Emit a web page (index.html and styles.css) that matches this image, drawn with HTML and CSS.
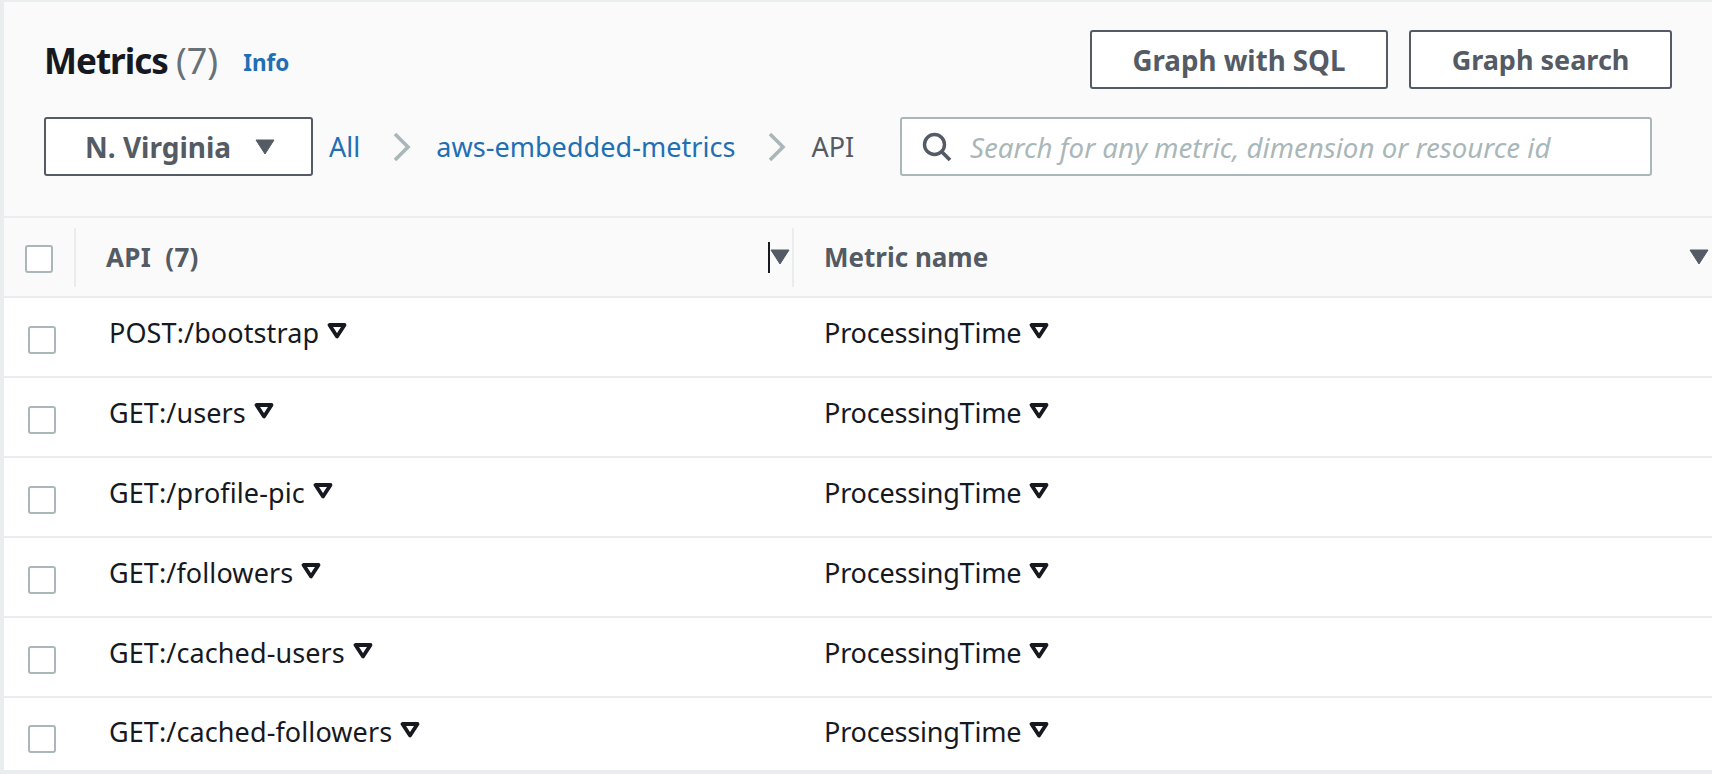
FILE: index.html
```html
<!DOCTYPE html>
<html lang="en">
<head>
  <meta charset="UTF-8">
  <meta name="viewport" content="width=device-width, initial-scale=1.0">
  <title>Metrics</title>
  <link rel="stylesheet" href="styles.css">
</head>
<body>
  <div class="panel">
    <div class="header">
      <div class="title-row">
        <h1>Metrics <span class="count">(7)</span></h1>
        <a class="info" href="#">Info</a>
        <div class="actions">
          <button class="btn btn-sql">Graph with SQL</button>
          <button class="btn btn-search">Graph search</button>
        </div>
      </div>
      <div class="filter-row">
        <button class="region">N. Virginia
          <svg class="region-caret" viewBox="0 0 20 16"><path d="M1 1h18l-9 14z" fill="#545b64" stroke="#545b64" stroke-linejoin="round"/></svg>
        </button>
        <nav class="crumbs">
          <a href="#">All</a>
          <svg class="chevron" viewBox="0 0 18 30"><path d="M2 2l13 13L2 28" fill="none" stroke="#aab7b8" stroke-width="3.6"/></svg>
          <a href="#">aws-embedded-metrics</a>
          <svg class="chevron" viewBox="0 0 18 30"><path d="M2 2l13 13L2 28" fill="none" stroke="#aab7b8" stroke-width="3.6"/></svg>
          <span class="current">API</span>
        </nav>
        <div class="search">
          <svg class="search-icon" viewBox="0 0 30 30"><circle cx="12.5" cy="12.5" r="10" fill="none" stroke="#545b64" stroke-width="3.4"/><path d="M20 20l8 8" stroke="#545b64" stroke-width="3.8"/></svg>
          <span class="placeholder">Search for any metric, dimension or resource id</span>
        </div>
      </div>
    </div>

    <div class="thead">
      <div class="cell-check"><span class="check head-check"></span></div>
      <div class="th th-api">API&nbsp; (7)
        <span class="resizer"></span>
        <svg class="sort" viewBox="0 0 20 16"><path d="M1 1h18l-9 14z" fill="#545b64" stroke="#545b64" stroke-linejoin="round"/></svg>
      </div>
      <div class="th th-metric">Metric name
        <svg class="sort" viewBox="0 0 20 16"><path d="M1 1h18l-9 14z" fill="#545b64" stroke="#545b64" stroke-linejoin="round"/></svg>
      </div>
    </div>

    <div class="row">
      <div class="cell-check"><span class="check"></span></div>
      <div class="td td-api">POST:/bootstrap <svg class="caret" viewBox="0 0 20 16"><path d="M2.5 2h15L10 13.5z" fill="none" stroke="#16191f" stroke-width="3.8" stroke-linejoin="round"/></svg></div>
      <div class="td td-metric">ProcessingTime <svg class="caret" viewBox="0 0 20 16"><path d="M2.5 2h15L10 13.5z" fill="none" stroke="#16191f" stroke-width="3.8" stroke-linejoin="round"/></svg></div>
    </div>
    <div class="row">
      <div class="cell-check"><span class="check"></span></div>
      <div class="td td-api">GET:/users <svg class="caret" viewBox="0 0 20 16"><path d="M2.5 2h15L10 13.5z" fill="none" stroke="#16191f" stroke-width="3.8" stroke-linejoin="round"/></svg></div>
      <div class="td td-metric">ProcessingTime <svg class="caret" viewBox="0 0 20 16"><path d="M2.5 2h15L10 13.5z" fill="none" stroke="#16191f" stroke-width="3.8" stroke-linejoin="round"/></svg></div>
    </div>
    <div class="row">
      <div class="cell-check"><span class="check"></span></div>
      <div class="td td-api">GET:/profile-pic <svg class="caret" viewBox="0 0 20 16"><path d="M2.5 2h15L10 13.5z" fill="none" stroke="#16191f" stroke-width="3.8" stroke-linejoin="round"/></svg></div>
      <div class="td td-metric">ProcessingTime <svg class="caret" viewBox="0 0 20 16"><path d="M2.5 2h15L10 13.5z" fill="none" stroke="#16191f" stroke-width="3.8" stroke-linejoin="round"/></svg></div>
    </div>
    <div class="row">
      <div class="cell-check"><span class="check"></span></div>
      <div class="td td-api">GET:/followers <svg class="caret" viewBox="0 0 20 16"><path d="M2.5 2h15L10 13.5z" fill="none" stroke="#16191f" stroke-width="3.8" stroke-linejoin="round"/></svg></div>
      <div class="td td-metric">ProcessingTime <svg class="caret" viewBox="0 0 20 16"><path d="M2.5 2h15L10 13.5z" fill="none" stroke="#16191f" stroke-width="3.8" stroke-linejoin="round"/></svg></div>
    </div>
    <div class="row">
      <div class="cell-check"><span class="check"></span></div>
      <div class="td td-api">GET:/cached-users <svg class="caret" viewBox="0 0 20 16"><path d="M2.5 2h15L10 13.5z" fill="none" stroke="#16191f" stroke-width="3.8" stroke-linejoin="round"/></svg></div>
      <div class="td td-metric">ProcessingTime <svg class="caret" viewBox="0 0 20 16"><path d="M2.5 2h15L10 13.5z" fill="none" stroke="#16191f" stroke-width="3.8" stroke-linejoin="round"/></svg></div>
    </div>
    <div class="row row-last">
      <div class="cell-check"><span class="check"></span></div>
      <div class="td td-api">GET:/cached-followers <svg class="caret" viewBox="0 0 20 16"><path d="M2.5 2h15L10 13.5z" fill="none" stroke="#16191f" stroke-width="3.8" stroke-linejoin="round"/></svg></div>
      <div class="td td-metric">ProcessingTime <svg class="caret" viewBox="0 0 20 16"><path d="M2.5 2h15L10 13.5z" fill="none" stroke="#16191f" stroke-width="3.8" stroke-linejoin="round"/></svg></div>
    </div>
  </div>
</body>
</html>
```

FILE: styles.css
```css
* { box-sizing: border-box; }
html, body { height: 100%; }
body { margin: 0; padding: 2px 0 4px 4px; background: #eaeded; font-family: "Noto Sans", sans-serif; font-size: 27px; color: #16191f; overflow: hidden; }
a { color: #1f6fb5; text-decoration: none; }

.panel { background: #fff; }
.header { height: 216px; background: #fafafa; border-bottom: 2px solid #eaeded; padding: 28px 40px 0 40px; }
.title-row { display: flex; align-items: center; height: 59px; }
h1 { margin: 2px 0 0; font-size: 35px; font-weight: 700; letter-spacing: -1px; }
.count { font-size: 36px; font-weight: 400; letter-spacing: 0; color: #687078; }
.info { margin-left: 25px; margin-top: 6px; font-size: 22.5px; font-weight: 700; }
.actions { margin-left: auto; display: flex; gap: 21px; }
.btn { height: 59px; background: #fff; border: 2px solid #545b64; border-radius: 3px; font: 700 28px "Noto Sans", sans-serif; color: #545b64; }
.btn-sql { width: 298px; font-size: 27.7px; }
.btn-search { width: 263px; font-size: 27px; }

.filter-row { display: flex; align-items: center; margin-top: 28px; height: 59px; }
.region { width: 269px; height: 59px; display: flex; align-items: center; padding: 0 0 0 39px; background: #fff; border: 2px solid #545b64; border-radius: 3px; font: 700 28px "Noto Sans", sans-serif; color: #545b64; }
.region-caret { width: 20px; height: 16px; margin-left: 24px; }
.crumbs { display: flex; align-items: center; margin-left: 16px; width: 571px; }
.chevron { width: 18px; height: 30px; margin: 0 25px 0 33px; }
.crumbs a + .chevron + a { letter-spacing: 0.05px; }
.current { color: #545b64; }
.search { flex: 1; height: 59px; display: flex; align-items: center; padding-left: 20px; background: #fff; border: 2px solid #aab7b8; border-radius: 3px; margin-right: 20px; }
.search-icon { width: 30px; height: 30px; flex: none; }
.placeholder { margin-left: 18px; font-size: 27.7px; font-style: italic; color: #aab7b8; }

.thead { display: flex; height: 80px; background: #fafafa; border-bottom: 2px solid #eaeded; align-items: center; }
.cell-check { width: 70px; flex: none; display: flex; padding-left: 21px; }
.check { width: 28px; height: 28px; background: #fff; border: 2px solid #aab7b8; border-radius: 3px; }
.head-check { margin-top: 4px; }
.th { display: flex; align-items: center; height: 59px; font-size: 26px; font-weight: 700; color: #545b64; border-left: 2px solid #eaeded; position: relative; }
.th-api { width: 718px; padding-left: 30px; letter-spacing: 0.3px; }
.th-metric { flex: 1; padding-left: 30px; }
.sort { position: absolute; top: 21px; right: 2px; width: 20px; height: 16px; }
.th-metric .sort { right: 3px; }
.resizer { position: absolute; top: 14px; right: 22px; width: 2px; height: 31px; background: #16191f; }

.row { display: flex; height: 80px; align-items: center; border-bottom: 2px solid #eaeded; }
.row-last { height: 72px; padding-top: 4px; border-bottom: 0; }
.row .cell-check { padding-left: 24px; padding-top: 6px; width: 105px; }
.td { display: flex; align-items: center; gap: 8px; margin-top: -9px; }
.td-api { width: 715px; letter-spacing: 0.1px; }
.td-metric { letter-spacing: -0.2px; }
.caret { width: 20px; height: 16px; margin-top: -4px; }
```
